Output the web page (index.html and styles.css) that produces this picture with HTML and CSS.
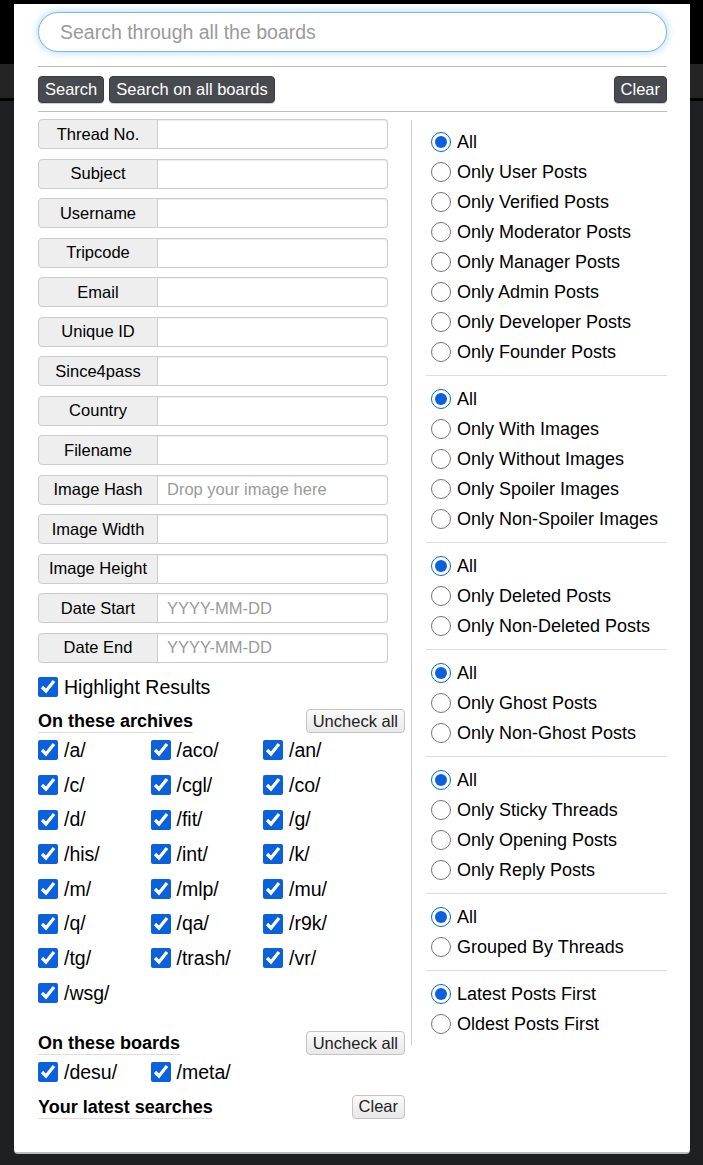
FILE: index.html
```html
<!DOCTYPE html>
<html lang="en">
<head>
  <meta charset="UTF-8" />
  <meta name="viewport" content="width=device-width, initial-scale=1.0"/>
  <title>Search</title>
  <link rel="stylesheet" href="styles.css">
</head>
<body>
  <div class="top-bar"></div>
  <div class="nav-bar"></div>

  <!-- Advanced search dropdown -->
  <form class="search-panel" onsubmit="return false">
    <input type="text" class="search-box" placeholder="Search through all the boards" />
    <hr class="rule">

    <div class="actions">
      <button class="btn-dark">Search</button>
      <button class="btn-dark">Search on all boards</button>
      <button class="btn-dark push-right" type="reset">Clear</button>
    </div>
    <hr class="rule">

    <div class="columns">
      <div class="col-left">
        <div class="field"><span class="field-label">Thread No.</span><input class="field-input" type="text"></div>
        <div class="field"><span class="field-label">Subject</span><input class="field-input" type="text"></div>
        <div class="field"><span class="field-label">Username</span><input class="field-input" type="text"></div>
        <div class="field"><span class="field-label">Tripcode</span><input class="field-input" type="text"></div>
        <div class="field"><span class="field-label">Email</span><input class="field-input" type="text"></div>
        <div class="field"><span class="field-label">Unique ID</span><input class="field-input" type="text"></div>
        <div class="field"><span class="field-label">Since4pass</span><input class="field-input" type="text"></div>
        <div class="field"><span class="field-label">Country</span><input class="field-input" type="text"></div>
        <div class="field"><span class="field-label">Filename</span><input class="field-input" type="text"></div>
        <div class="field"><span class="field-label">Image Hash</span><input class="field-input" type="text" placeholder="Drop your image here"></div>
        <div class="field"><span class="field-label">Image Width</span><input class="field-input" type="text"></div>
        <div class="field"><span class="field-label">Image Height</span><input class="field-input" type="text"></div>
        <div class="field"><span class="field-label">Date Start</span><input class="field-input" type="text" placeholder="YYYY-MM-DD"></div>
        <div class="field"><span class="field-label">Date End</span><input class="field-input" type="text" placeholder="YYYY-MM-DD"></div>

        <label class="check highlight"><input type="checkbox" checked>Highlight Results</label>

        <div class="section-head">
          <span class="section-title">On these archives</span>
          <button class="btn-light">Uncheck all</button>
        </div>
        <div class="board-grid">
          <label class="check"><input type="checkbox" checked>/a/</label>
          <label class="check"><input type="checkbox" checked>/aco/</label>
          <label class="check"><input type="checkbox" checked>/an/</label>
          <label class="check"><input type="checkbox" checked>/c/</label>
          <label class="check"><input type="checkbox" checked>/cgl/</label>
          <label class="check"><input type="checkbox" checked>/co/</label>
          <label class="check"><input type="checkbox" checked>/d/</label>
          <label class="check"><input type="checkbox" checked>/fit/</label>
          <label class="check"><input type="checkbox" checked>/g/</label>
          <label class="check"><input type="checkbox" checked>/his/</label>
          <label class="check"><input type="checkbox" checked>/int/</label>
          <label class="check"><input type="checkbox" checked>/k/</label>
          <label class="check"><input type="checkbox" checked>/m/</label>
          <label class="check"><input type="checkbox" checked>/mlp/</label>
          <label class="check"><input type="checkbox" checked>/mu/</label>
          <label class="check"><input type="checkbox" checked>/q/</label>
          <label class="check"><input type="checkbox" checked>/qa/</label>
          <label class="check"><input type="checkbox" checked>/r9k/</label>
          <label class="check"><input type="checkbox" checked>/tg/</label>
          <label class="check"><input type="checkbox" checked>/trash/</label>
          <label class="check"><input type="checkbox" checked>/vr/</label>
          <label class="check"><input type="checkbox" checked>/wsg/</label>
        </div>

        <div class="section-head boards-head">
          <span class="section-title">On these boards</span>
          <button class="btn-light">Uncheck all</button>
        </div>
        <div class="board-grid">
          <label class="check"><input type="checkbox" checked>/desu/</label>
          <label class="check"><input type="checkbox" checked>/meta/</label>
        </div>

        <div class="section-head latest-head">
          <span class="section-title">Your latest searches</span>
          <button class="btn-light">Clear</button>
        </div>
      </div>

      <div class="col-right">
        <div class="radio-group">
          <label class="radio"><input type="radio" name="cap" checked>All</label>
          <label class="radio"><input type="radio" name="cap">Only User Posts</label>
          <label class="radio"><input type="radio" name="cap">Only Verified Posts</label>
          <label class="radio"><input type="radio" name="cap">Only Moderator Posts</label>
          <label class="radio"><input type="radio" name="cap">Only Manager Posts</label>
          <label class="radio"><input type="radio" name="cap">Only Admin Posts</label>
          <label class="radio"><input type="radio" name="cap">Only Developer Posts</label>
          <label class="radio"><input type="radio" name="cap">Only Founder Posts</label>
        </div>
        <div class="radio-group">
          <label class="radio"><input type="radio" name="filter" checked>All</label>
          <label class="radio"><input type="radio" name="filter">Only With Images</label>
          <label class="radio"><input type="radio" name="filter">Only Without Images</label>
          <label class="radio"><input type="radio" name="filter">Only Spoiler Images</label>
          <label class="radio"><input type="radio" name="filter">Only Non-Spoiler Images</label>
        </div>
        <div class="radio-group">
          <label class="radio"><input type="radio" name="deleted" checked>All</label>
          <label class="radio"><input type="radio" name="deleted">Only Deleted Posts</label>
          <label class="radio"><input type="radio" name="deleted">Only Non-Deleted Posts</label>
        </div>
        <div class="radio-group">
          <label class="radio"><input type="radio" name="ghost" checked>All</label>
          <label class="radio"><input type="radio" name="ghost">Only Ghost Posts</label>
          <label class="radio"><input type="radio" name="ghost">Only Non-Ghost Posts</label>
        </div>
        <div class="radio-group">
          <label class="radio"><input type="radio" name="type" checked>All</label>
          <label class="radio"><input type="radio" name="type">Only Sticky Threads</label>
          <label class="radio"><input type="radio" name="type">Only Opening Posts</label>
          <label class="radio"><input type="radio" name="type">Only Reply Posts</label>
        </div>
        <div class="radio-group">
          <label class="radio"><input type="radio" name="results" checked>All</label>
          <label class="radio"><input type="radio" name="results">Grouped By Threads</label>
        </div>
        <div class="radio-group">
          <label class="radio"><input type="radio" name="order" checked>Latest Posts First</label>
          <label class="radio"><input type="radio" name="order">Oldest Posts First</label>
        </div>
      </div>
    </div>
  </form>
</body>
</html>
```

FILE: styles.css
```css
body {
  margin: 0;
  background: #1f2023;
  font-family: "Liberation Sans", Arial, sans-serif;
  color: #000;
  height: 1165px;
  overflow: hidden;
}

.top-bar {
  height: 64px;
  background: #000;
}

.nav-bar {
  height: 34px;
  background: #242424;
  border-bottom: 3px solid #000;
}

/* dropdown over the page */
.search-panel {
  position: absolute;
  top: 4px;
  left: 14px;
  width: 676px;
  box-sizing: border-box;
  padding: 8px 23px 33px 24px;
  background: #fff;
  border-bottom: 2px solid #bbb;
  border-radius: 0 0 4px 4px;
}

.search-box {
  display: block;
  width: 100%;
  height: 40px;
  box-sizing: border-box;
  padding: 0 21px;
  border: 1px solid #7fb2e6;
  border-radius: 20px;
  box-shadow: 0 0 8px rgba(102, 175, 233, 0.55);
  font-family: inherit;
  font-size: 19.5px;
  outline: none;
}

.search-box::placeholder,
.field-input::placeholder {
  color: #9a9a9a;
}

.rule {
  margin: 14px 0 0;
  border: none;
  border-top: 1px solid #bdbdbd;
}

.actions {
  display: flex;
  gap: 5px;
  margin-top: 9px;
}

.actions + .rule {
  margin-top: 8px;
}

.btn-dark {
  height: 27px;
  padding: 0 6px;
  background: #474a4f;
  color: #fff;
  border: 1px solid #3a3c40;
  border-radius: 4px;
  font-family: inherit;
  font-size: 16.5px;
  box-shadow: 0 1px 1px rgba(0, 0, 0, 0.2);
}

.push-right {
  margin-left: auto;
}

.columns {
  display: grid;
  grid-template-columns: 367px 1fr;
  column-gap: 6px;
}

/* left side: text filters */
.col-left {
  padding-top: 7px;
}

.field {
  display: flex;
  width: 350px;
  height: 30px;
  margin-bottom: 9.5px;
}

.field-label {
  width: 120px;
  flex-shrink: 0;
  box-sizing: border-box;
  display: flex;
  align-items: center;
  justify-content: center;
  background: #eee;
  border: 1px solid #ccc;
  border-radius: 4px 0 0 4px;
  font-size: 16.5px;
}

.field-input {
  flex: 1;
  min-width: 0;
  box-sizing: border-box;
  padding: 0 9px;
  border: 1px solid #ccc;
  border-left: none;
  border-radius: 0 4px 4px 0;
  box-shadow: inset 0 1px 1px rgba(0, 0, 0, 0.075);
  font-family: inherit;
  font-size: 16.5px;
}

.check {
  display: flex;
  align-items: center;
  height: 34.7px;
  font-size: 19.5px;
}

.check input,
.radio input {
  width: 20px;
  height: 20px;
  margin: 0 6px 0 0;
  accent-color: #0b61dc;
  flex-shrink: 0;
}

.check.highlight {
  height: 30px;
}

.section-head {
  display: flex;
  justify-content: space-between;
  align-items: flex-end;
  margin-top: 7px;
}

.section-title {
  font-weight: bold;
  font-size: 18px;
  line-height: 22px;
  border-bottom: 1px solid #ddd;
}

.btn-light {
  height: 24px;
  padding: 0 6px;
  background: linear-gradient(#fafafa, #e8e8e8);
  border: 1px solid #c4c4c4;
  border-radius: 4px;
  font-family: inherit;
  font-size: 16.5px;
  color: #222;
}

.board-grid {
  display: grid;
  grid-template-columns: repeat(3, 112.5px);
}

.boards-head {
  margin-top: 20.5px;
}

.latest-head {
  margin-top: 5px;
}

/* right side: radio filters */
.col-right {
  margin-top: 8px;
  border-left: 1px solid #ccc;
  padding-left: 14px;
  align-self: start;
  height: 925px;
}

.radio-group {
  padding: 8px 0;
  border-top: 1px solid #ddd;
}

.radio-group:first-child {
  padding-top: 7px;
  border-top: none;
}

.radio {
  display: flex;
  align-items: center;
  height: 30px;
  padding-left: 5px;
  font-size: 18px;
}
```
